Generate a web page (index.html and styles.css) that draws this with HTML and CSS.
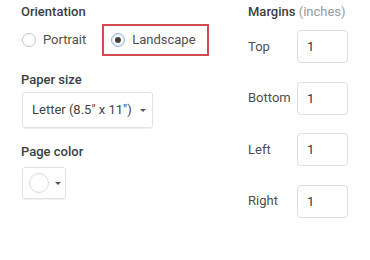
FILE: index.html
```html
<!DOCTYPE html>
<html lang="en">
<head>
    <meta charset="UTF-8">
    <title>Page setup</title>
    <link rel="stylesheet" href="styles.css">
</head>
<body>

<div id="setup">
    <div class="column left">
        <div class="label">Orientation</div>
        <div class="radioRow">
            <div class="radio">
                <span class="circle"></span>
                <span>Portrait</span>
            </div>
            <div class="radio selected">
                <span class="circle checked"></span>
                <span>Landscape</span>
            </div>
        </div>

        <div class="label paperLabel">Paper size</div>
        <div class="dropdown">
            <span>Letter (8.5" x 11")</span>
            <span class="arrow"></span>
        </div>

        <div class="label colorLabel">Page color</div>
        <div class="colorPicker">
            <span class="swatch"></span>
            <span class="arrow"></span>
        </div>
    </div>

    <div class="column right">
        <div class="label">Margins <span class="hint">(inches)</span></div>
        <div class="margins">
            <div class="marginRow">
                <span class="marginName">Top</span>
                <div class="field">1</div>
            </div>
            <div class="marginRow">
                <span class="marginName">Bottom</span>
                <div class="field">1</div>
            </div>
            <div class="marginRow">
                <span class="marginName">Left</span>
                <div class="field">1</div>
            </div>
            <div class="marginRow">
                <span class="marginName">Right</span>
                <div class="field">1</div>
            </div>
        </div>
    </div>
</div>

</body>
</html>
```

FILE: styles.css
```css
body {
    margin: 0;
    background: white;
    color: #4f4f4f;
    font-family: Roboto, "Liberation Sans", sans-serif;
    font-size: 13px;
    line-height: 16px;
}

#setup {
    display: flex;
    padding: 4px 0 0 21px;
}

.column {
    display: flex;
    flex-direction: column;
}

.left {
    width: 226px;
}

.label {
    font-weight: 500;
    color: #3c4043;
}

.hint {
    font-weight: 400;
    color: #9a9a9a;
}

.radioRow {
    display: flex;
    align-items: center;
    margin-top: 4px;
    height: 32px;
}

.radio {
    display: flex;
    align-items: center;
    gap: 7px;
    padding-left: 1px;
    margin-right: 16px;
}

.radio.selected {
    box-sizing: border-box;
    height: 32px;
    border: 2px solid #d04a4f;
    padding: 0 11px 0 7px;
    margin-right: 0;
}

.circle {
    box-sizing: border-box;
    width: 14px;
    height: 14px;
    border: 1px solid #c4c4c4;
    border-radius: 50%;
    position: relative;
}

.circle.checked {
    border: 1px solid #8fb3e6;
    box-shadow: inset 0 0 0 1px #dbe6f6;
}

.circle.checked::after {
    content: "";
    position: absolute;
    top: 3px;
    left: 3px;
    width: 6px;
    height: 6px;
    border-radius: 50%;
    background: #3f3f3f;
}

.paperLabel {
    margin-top: 16px;
}

.dropdown {
    box-sizing: border-box;
    display: flex;
    align-items: center;
    gap: 8px;
    width: 131px;
    height: 36px;
    margin-top: 4px;
    margin-left: 1px;
    padding-left: 9px;
    border: 1px solid #e2e2e2;
    border-radius: 3px;
    box-shadow: 0 1px 1px #f0f0f0;
    color: #444;
}

.arrow {
    width: 0;
    height: 0;
    border-left: 3px solid transparent;
    border-right: 3px solid transparent;
    border-top: 3px solid #555;
}

.colorLabel {
    margin-top: 16px;
}

.colorPicker {
    box-sizing: border-box;
    display: flex;
    align-items: center;
    gap: 6px;
    width: 44px;
    height: 32px;
    margin-top: 7px;
    margin-left: 1px;
    padding-left: 6px;
    border: 1px solid #e2e2e2;
    border-radius: 3px;
    box-shadow: 0 1px 1px #f0f0f0;
}

.swatch {
    box-sizing: border-box;
    width: 20px;
    height: 20px;
    border: 1px solid #dcdcdc;
    border-radius: 50%;
}

.right {
    margin-left: 1px;
}

.margins {
    display: flex;
    flex-direction: column;
    gap: 18.6px;
    margin-top: 10px;
}

.marginRow {
    display: flex;
    align-items: center;
}

.marginName {
    width: 49px;
    color: #4f4f4f;
}

.field {
    box-sizing: border-box;
    width: 51px;
    height: 33px;
    padding-left: 9px;
    border: 1px solid #e0e0e0;
    border-radius: 4px;
    line-height: 31px;
    color: #333;
}
```
